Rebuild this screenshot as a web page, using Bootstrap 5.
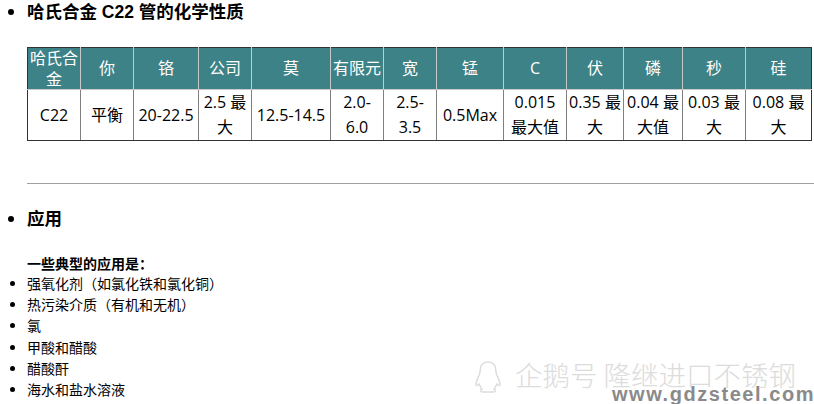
<!DOCTYPE html>
<html lang="zh">
<head>
<meta charset="utf-8">
<title>哈氏合金 C22</title>
<link href="https://cdn.jsdelivr.net/npm/bootstrap@5.3.0/dist/css/bootstrap.min.css" rel="stylesheet">
<style>
html,body{height:404px;overflow:hidden;background:#fff}
body{position:relative;color:#000;font-family:"Open Sans","Noto Sans CJK SC",sans-serif;font-size:14px;line-height:21px}
.sheet{padding:0;margin:0;width:814px}
.bul{list-style:disc;margin:0;padding-left:27px}
.bul li::marker{font-size:17px}
.head-a{font-family:"Liberation Sans","Noto Sans CJK SC",sans-serif;font-size:17.5px;font-weight:700;line-height:24px;margin:0}
.chem{table-layout:fixed;border-collapse:collapse;width:784px;margin:23px 0 0 27px;font-size:16px;text-align:center}
.chem th,.chem td{padding:0 1px;vertical-align:middle}
.chem th{background:#3d8287;color:#fff;font-weight:400;border:1px solid #c9c9c9;line-height:20.5px;height:42px}
.chem td{background:#fff;border:1px solid #808080;height:50px;line-height:25px}
.chem tr>*:first-child{border-left:1px solid #333}
.chem tr>*:last-child{border-right:1px solid #333}
.chem th{border-top:1px solid #333}
.chem td{border-bottom:1px solid #333}
.w1{width:53px}.w2{width:53px}.w3{width:65px}.w4{width:53px}.w5{width:79px}.w6{width:53px}.w7{width:53px}.w8{width:67px}.w9{width:63px}.w10{width:57px}.w11{width:59px}.w12{width:63px}.w13{width:66px}
.rule{border:0;border-top:1px solid #a0a0a0;opacity:1;margin:42px 0 0 27px;width:787px;height:1px}
.head-b{margin-top:23px}
.intro{font-family:"Liberation Sans","Noto Sans CJK SC",sans-serif;font-size:14px;font-weight:700;margin:25px 0 0 27px;line-height:17px}
.apps{font-size:14px;line-height:21.2px;font-family:"Liberation Sans","Noto Sans CJK SC",sans-serif;margin-top:0}
.apps li{height:21.2px}
.wm{position:absolute;left:473px;top:358px;width:341px;height:46px;pointer-events:none}
.wm-cn{position:absolute;left:42px;top:1px;font-family:"Noto Sans CJK SC",sans-serif;font-size:27.5px;line-height:30px;color:#dcdcdc;white-space:nowrap;font-weight:300}
.wm-url{position:absolute;left:139px;top:26px;font-family:"Liberation Sans",sans-serif;font-weight:700;font-size:20px;line-height:20px;color:#8a8a8a;letter-spacing:1.55px;white-space:nowrap}
.wm-ico{position:absolute;left:0;top:2px}
</style>
</head>
<body>
<div class="sheet">
<ul class="bul">
<li><h2 class="head-a">哈氏合金 C22 管的化学性质</h2></li>
</ul>
<table class="chem">
<colgroup><col class="w1"><col class="w2"><col class="w3"><col class="w4"><col class="w5"><col class="w6"><col class="w7"><col class="w8"><col class="w9"><col class="w10"><col class="w11"><col class="w12"><col class="w13"></colgroup>
<tr><th>哈氏合金</th><th>你</th><th>铬</th><th>公司</th><th>莫</th><th>有限元</th><th>宽</th><th>锰</th><th>C</th><th>伏</th><th>磷</th><th>秒</th><th>硅</th></tr>
<tr><td>C22</td><td>平衡</td><td>20-22.5</td><td>2.5 最大</td><td>12.5-14.5</td><td>2.0-6.0</td><td>2.5-3.5</td><td>0.5Max</td><td>0.015 最大值</td><td>0.35 最大</td><td>0.04 最大值</td><td>0.03 最大</td><td>0.08 最大</td></tr>
</table>
<hr class="rule">
<ul class="bul head-b">
<li><h2 class="head-a">应用</h2></li>
</ul>
<p class="intro">一些典型的应用是：</p>
<ul class="bul apps">
<li>强氧化剂（如氯化铁和氯化铜）</li>
<li>热污染介质（有机和无机）</li>
<li>氯</li>
<li>甲酸和醋酸</li>
<li>醋酸酐</li>
<li>海水和盐水溶液</li>
</ul>
</div>
<div class="wm">
<svg class="wm-ico" width="30" height="34" viewBox="0 0 30 34" fill="none" stroke="#dcdcdc" stroke-width="1.5"><path d="M15 2c-6 0-8 5-8 10 0 3-4 8-4 12 0 2 1 2 3 0 1 2 2 4 3 5-2 1-2 3 1 3h10c3 0 3-2 1-3 1-1 2-3 3-5 2 2 3 2 3 0 0-4-4-9-4-12 0-5-2-10-8-10z"/></svg>
<span class="wm-cn">企鹅号 隆继进口不锈钢</span>
<span class="wm-url">www.gdzsteel.com</span>
</div>
</body>
</html>
